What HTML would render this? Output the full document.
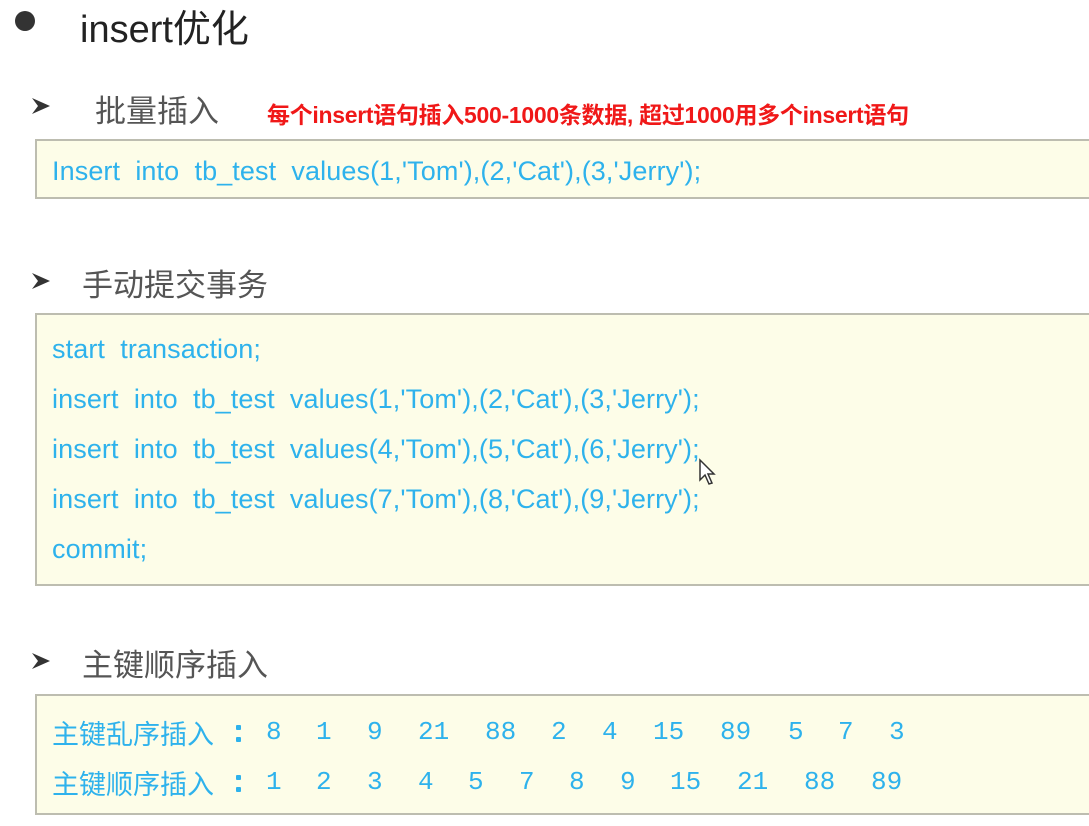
<!DOCTYPE html>
<html><head><meta charset="utf-8"><style>
body{margin:0;width:1089px;height:826px;background:#fff;position:relative;overflow:hidden;font-family:"Liberation Sans","Noto Sans CJK SC",sans-serif}
.a{position:absolute;white-space:nowrap}
.box{position:absolute;left:35px;right:-2px;background:#fdfde8;border:2px solid #bdbdb0}
.c{color:#2eb2ec;font-size:27px;letter-spacing:0.1px;position:absolute;left:52px;white-space:nowrap}
.h{color:#555;font-size:31px}
.n{position:absolute;color:#2eb2ec;font-family:"Liberation Mono",monospace;font-size:26px}
.l{color:#2eb2ec;font-size:27px;position:absolute;left:52px;white-space:nowrap}
.col{position:absolute;left:236px;width:5px;height:5px;background:#2eb2ec;border-radius:1px}
</style></head><body>
<div class="a" style="left:15px;top:11px;width:20px;height:20px;border-radius:50%;background:#333"></div>
<div class="a" style="left:80px;top:-2px;font-size:38px;color:#222">insert优化</div>
<svg class="a" style="left:31px;top:97px" width="20" height="18" viewBox="0 0 20 18"><path d="M1 1 L19 9 L1 17 L7 9 Z" fill="#333"/></svg>
<div class="a h" style="left:95px;top:86px">批量插入</div>
<div class="a" style="left:267px;top:96px;color:#f01818;font-size:23px;font-weight:bold;letter-spacing:-0.3px">每个insert语句插入500-1000条数据, 超过1000用多个insert语句</div>
<div class="box" style="top:139px;height:56px"></div>
<div class="c" style="top:156px">Insert&nbsp; into&nbsp; tb_test&nbsp; values(1,'Tom'),(2,'Cat'),(3,'Jerry');</div>
<svg class="a" style="left:31px;top:272px" width="20" height="18" viewBox="0 0 20 18"><path d="M1 1 L19 9 L1 17 L7 9 Z" fill="#333"/></svg>
<div class="a h" style="left:82px;top:260px">手动提交事务</div>
<div class="box" style="top:313px;height:269px"></div>
<div class="c" style="top:334px">start&nbsp; transaction;</div>
<div class="c" style="top:384px">insert&nbsp; into&nbsp; tb_test&nbsp; values(1,'Tom'),(2,'Cat'),(3,'Jerry');</div>
<div class="c" style="top:434px">insert&nbsp; into&nbsp; tb_test&nbsp; values(4,'Tom'),(5,'Cat'),(6,'Jerry');</div>
<div class="c" style="top:484px">insert&nbsp; into&nbsp; tb_test&nbsp; values(7,'Tom'),(8,'Cat'),(9,'Jerry');</div>
<div class="c" style="top:534px">commit;</div>
<svg class="a" style="left:31px;top:652px" width="20" height="18" viewBox="0 0 20 18"><path d="M1 1 L19 9 L1 17 L7 9 Z" fill="#333"/></svg>
<div class="a h" style="left:82px;top:640px">主键顺序插入</div>
<div class="box" style="top:694px;height:117px"></div>
<div class="l" style="top:713px">主键乱序插入</div><div class="col" style="top:725px"></div><div class="col" style="top:737px"></div>
<div class="l" style="top:763px">主键顺序插入</div><div class="col" style="top:775px"></div><div class="col" style="top:787px"></div>
<span class="n" style="left:266px;top:717px">8</span><span class="n" style="left:316px;top:717px">1</span><span class="n" style="left:367px;top:717px">9</span><span class="n" style="left:418px;top:717px">21</span><span class="n" style="left:485px;top:717px">88</span><span class="n" style="left:551px;top:717px">2</span><span class="n" style="left:602px;top:717px">4</span><span class="n" style="left:653px;top:717px">15</span><span class="n" style="left:720px;top:717px">89</span><span class="n" style="left:788px;top:717px">5</span><span class="n" style="left:838px;top:717px">7</span><span class="n" style="left:889px;top:717px">3</span>
<span class="n" style="left:266px;top:767px">1</span><span class="n" style="left:316px;top:767px">2</span><span class="n" style="left:367px;top:767px">3</span><span class="n" style="left:418px;top:767px">4</span><span class="n" style="left:468px;top:767px">5</span><span class="n" style="left:519px;top:767px">7</span><span class="n" style="left:569px;top:767px">8</span><span class="n" style="left:620px;top:767px">9</span><span class="n" style="left:670px;top:767px">15</span><span class="n" style="left:737px;top:767px">21</span><span class="n" style="left:804px;top:767px">88</span><span class="n" style="left:871px;top:767px">89</span>
<svg class="a" style="left:698px;top:458px" width="18" height="28" viewBox="0 0 18 28"><path d="M2 2 L2 22 L7 17 L11 26 L14 25 L10 16 L16 16 Z" fill="#fff" stroke="#333" stroke-width="1.5"/></svg>
</body></html>
